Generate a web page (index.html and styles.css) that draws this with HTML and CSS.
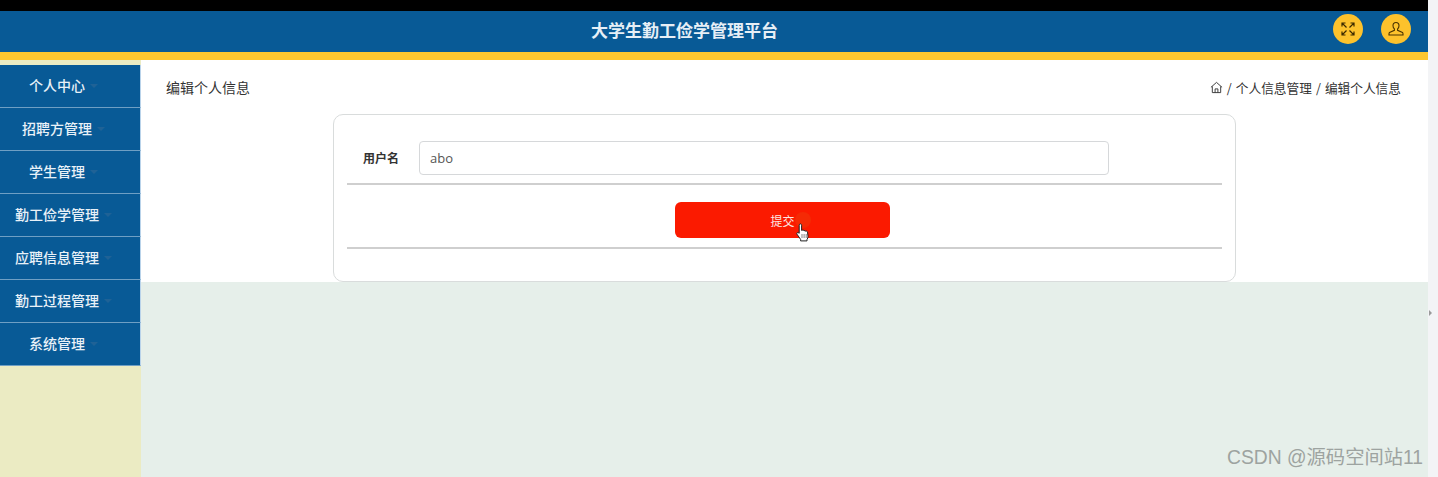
FILE: index.html
```html
<!DOCTYPE html>
<html lang="zh">
<head>
  <meta charset="UTF-8" />
  <title>大学生勤工俭学管理平台</title>
  <link rel="stylesheet" href="styles.css">
</head>
<body>
<div class="page">
  <div class="topline"></div>
  <header class="header">
    <div class="title">大学生勤工俭学管理平台</div>
    <div class="tools">
      <span class="tool">
        <svg width="16" height="16" viewBox="0 0 16 16" fill="none" stroke="#3d2a00" stroke-width="1.200">
          <path d="M2 5.500V2h3.500M2 2l4.500 4.500M14 5.500V2h-3.500M14 2L9.500 6.500M2 10.500V14h3.500M2 14l4.500-4.500M14 10.500V14h-3.500M14 14L9.500 9.500"/>
        </svg>
      </span>
      <span class="tool">
        <svg width="16" height="16" viewBox="0 0 16 16" fill="none" stroke="#4a3200" stroke-width="1.100">
          <path d="M8 1.500c-2 0-3 1.500-3 3.200 0 1.400.6 2.500 1.400 3.200v1.400L1.500 11.500c-.5.300-.5 1-.5 1.500v1h14v-1c0-.5 0-1.200-.5-1.500L9.600 9.300V7.900c.8-.7 1.400-1.800 1.400-3.200 0-1.700-1-3.200-3-3.200z"/>
        </svg>
      </span>
    </div>
  </header>
  <div class="stripe"></div>
  <div class="layout">
    <nav class="sidebar">
      <a class="menu-item">个人中心<i class="caret"></i></a>
      <a class="menu-item">招聘方管理<i class="caret"></i></a>
      <a class="menu-item">学生管理<i class="caret"></i></a>
      <a class="menu-item">勤工俭学管理<i class="caret"></i></a>
      <a class="menu-item">应聘信息管理<i class="caret"></i></a>
      <a class="menu-item">勤工过程管理<i class="caret"></i></a>
      <a class="menu-item">系统管理<i class="caret"></i></a>
    </nav>
    <main class="main">
      <section class="panel">
        <div class="crumbs">
          <div class="crumb-title">编辑个人信息</div>
          <div class="crumb-path">
            <svg width="13" height="13" viewBox="0 0 14 14" fill="none" stroke="#333" stroke-width="1">
              <path d="M1 6.800L7 1.500l6 5.300M2.500 5.800v6.700h9V5.800M5.500 12.500V8.500h3v4"/>
            </svg>
            <span>/</span><span>个人信息管理</span><span>/</span><span>编辑个人信息</span>
          </div>
        </div>
        <form class="card">
          <div class="row">
            <label class="label">用户名</label>
            <input class="input" type="text" value="abo">
          </div>
          <div class="actions">
            <button class="submit" type="button">提交</button>
            <i class="click-glow"></i>
            <svg class="pointer" width="14" height="19" viewBox="0 0 14 19">
              <path d="M3.500 1.300c.8-.8 2.100-.3 2.100.9v5.200l.8-.2c.7-.2 1.300 0 1.600.5.700-.3 1.400-.1 1.700.5.800-.3 1.600.1 1.800.9l.5 4c.1 1.300-.3 2.500-1 3.400v1.400H4.600v-1.500L1 11.200c-.6-.9.200-2 1.200-1.600l1 .7V2.200c0-.3.100-.6.300-.9z" fill="#fff" stroke="#222" stroke-width="1"/>
              <path d="M6 11v4M8.100 11v4M10.200 11v4" stroke="#555" stroke-width=".7"/>
            </svg>
          </div>
        </form>
      </section>
    </main>
  </div>
  <div class="watermark">CSDN @源码空间站11</div>
</div>
<div class="scrollbar"><i class="scroll-arrow"></i></div>
</body>
</html>
```

FILE: styles.css
```css
* {
  box-sizing: border-box;
}
html, body {
  margin: 0;
  height: 100%;
  overflow: hidden;
}
body {
  display: flex;
  font-family: "Noto Sans CJK SC", "Liberation Sans", sans-serif;
  background: #fff;
}
.page {
  position: relative;
  flex: 1;
  display: flex;
  flex-direction: column;
  min-width: 0;
}
.topline {
  height: 11px;
  background: #000;
}
.header {
  height: 41px;
  display: flex;
  align-items: center;
  padding: 0 17px 5px 36px;
  background: #085a96;
}
.title {
  flex: 1;
  text-align: center;
  font-size: 17px;
  font-weight: 700;
  color: #e6eff6;
}
.tools {
  display: flex;
  gap: 18px;
}
.tool {
  width: 30px;
  height: 30px;
  border-radius: 50%;
  background: #fdc22c;
  display: flex;
  align-items: center;
  justify-content: center;
}
.stripe {
  height: 8px;
  background: #fdc730;
}
.layout {
  flex: 1;
  display: flex;
  min-height: 0;
}
.sidebar {
  width: 141px;
  padding-top: 5px;
  background: #ebebc3;
}
.menu-item {
  height: 43px;
  padding-bottom: 2px;
  display: flex;
  align-items: center;
  justify-content: center;
  font-size: 14px;
  font-weight: 500;
  color: #e8f1f8;
  background: #085a96;
  border-bottom: 1px solid #6f9fc4;
  border-right: 1px solid #b9d3ea;
}
.caret {
  width: 0;
  height: 0;
  margin: 2px 13px 0 5px;
  border: 4px solid transparent;
  border-top: 4px solid #1f6296;
  border-bottom: 0;
}
.main {
  flex: 1;
  background: #e6efea;
  min-width: 0;
}
.panel {
  background: #fff;
  height: 222px;
}
.crumbs {
  height: 54px;
  display: flex;
  align-items: center;
  justify-content: space-between;
  padding: 0 27px 0 25px;
}
.crumb-title {
  font-size: 14px;
  color: #333;
}
.crumb-path {
  display: flex;
  align-items: center;
  gap: 4px;
  font-size: 12.700px;
  color: #333;
}
.card {
  width: 903px;
  height: 168px;
  margin-left: 192px;
  padding: 26px 13px 0;
  background: #fff;
  border: 1px solid #d9dcdc;
  border-radius: 10px;
}
.row {
  height: 44px;
  display: flex;
  align-items: flex-start;
  border-bottom: 2px solid #cfcfcf;
}
.label {
  width: 72px;
  padding-right: 20px;
  text-align: right;
  font-size: 12px;
  font-weight: 700;
  line-height: 34px;
  color: #333;
}
.input {
  width: 690px;
  height: 34px;
  padding: 0 10px;
  border: 1px solid #d6d8da;
  border-radius: 4px;
  font-family: "Open Sans", "Liberation Sans", sans-serif;
  font-size: 13px;
  color: #555;
  background: #fff;
}
.actions {
  position: relative;
  height: 64px;
  padding: 17px 0 0 328px;
  border-bottom: 2px solid #cfcfcf;
}
.submit {
  display: block;
  width: 215px;
  height: 36px;
  border: 0;
  border-radius: 6px;
  background: #fb1a00;
  color: #fde8e4;
  font-family: inherit;
  font-size: 12px;
}
.click-glow {
  position: absolute;
  left: 448px;
  top: 27px;
  width: 16px;
  height: 16px;
  border-radius: 50%;
  background: #f52a05;
}
.pointer {
  position: absolute;
  left: 449px;
  top: 38px;
}
.watermark {
  position: absolute;
  right: 5px;
  bottom: 7px;
  font-family: "Liberation Sans", "Noto Sans CJK SC", sans-serif;
  font-size: 19.300px;
  color: #9da3a0;
}
.scrollbar {
  position: relative;
  width: 10px;
  background: #f3f4f6;
}
.scroll-arrow {
  position: absolute;
  left: 1px;
  top: 310px;
  width: 0;
  height: 0;
  border: 3px solid transparent;
  border-left: 3px solid #9a9a9a;
  border-right: 0;
}
```
